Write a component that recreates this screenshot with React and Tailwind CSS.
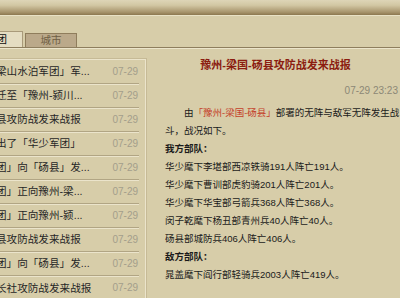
import React from 'react';

const reports = [
  { title: '梁山水泊军团」军...', date: '07-29' },
  { title: '迁至「豫州-颍川...', date: '07-29' },
  { title: '县攻防战发来战报', date: '07-29' },
  { title: '出了「华少军团」', date: '07-29' },
  { title: '团」向「砀县」发...', date: '07-29' },
  { title: '团」正向豫州-梁...', date: '07-29' },
  { title: '团」正向豫州-颍...', date: '07-29' },
  { title: '县攻防战发来战报', date: '07-29' },
  { title: '团」向「砀县」发...', date: '07-29' },
  { title: '长社攻防战发来战报', date: '07-29' },
];

const ourTroops = [
  '华少麾下李堪部西凉铁骑191人阵亡191人。',
  '华少麾下曹训部虎豹骑201人阵亡201人。',
  '华少麾下华宝部弓箭兵368人阵亡368人。',
  '闵子乾麾下杨丑部青州兵40人阵亡40人。',
  '砀县部城防兵406人阵亡406人。',
];

const enemyTroops = ['晁盖麾下阎行部轻骑兵2003人阵亡419人。'];

function ReportList() {
  return (
    <div className="ml-[-5px] w-[151px] pt-[10px]">
      <div className="border-t border-r border-[#ebe4cb] shadow-[1px_-1px_0_#c6ba96]">
        {reports.map((item, i) => (
          <div key={i} className="mr-[6px]">
            <div
              className={
                'flex h-[24px] items-center justify-between ' +
                (i < reports.length - 1 ? 'border-b border-[#b1a584] shadow-[0_1px_0_#ebe4cb]' : '')
              }
            >
              <span className="pl-[1px] text-[10.6px] leading-none text-[#262626] whitespace-nowrap">
                {item.title}
              </span>
              <span className="pr-[1px] text-[10px] leading-none text-[#a39e8b]">{item.date}</span>
            </div>
          </div>
        ))}
      </div>
    </div>
  );
}

function ReportDetail() {
  return (
    <div className="flex-1 min-w-0 pl-[5px] pt-[8px]">
      <h1 className="text-center text-[11px] font-bold leading-[16px] text-[#8b1c10] whitespace-nowrap">
        豫州-梁国-砀县攻防战发来战报
      </h1>
      <div className="mt-[11px] pr-[2px] text-right text-[10px] leading-[14px] text-[#8c8876]">
        07-29 23:23
      </div>
      <div className="mt-[6px] pl-[14px] text-[9.5px] leading-[18px] text-[#1a1a1a]">
        <p className="whitespace-nowrap pl-[2em]">
          由<span className="text-[#c4402a]">「豫州-梁国-砀县」</span>部署的无阵与敌军无阵发生战
        </p>
        <p>斗，战况如下。</p>
        <p className="font-bold">我方部队：</p>
        {ourTroops.map((line) => (
          <p key={line} className="whitespace-nowrap">{line}</p>
        ))}
        <p className="font-bold">敌方部队：</p>
        {enemyTroops.map((line) => (
          <p key={line} className="whitespace-nowrap">{line}</p>
        ))}
      </div>
    </div>
  );
}

export default function App() {
  return (
    <div className="relative h-[298px] w-[400px] overflow-hidden bg-[#d7cda9] font-['Liberation_Sans','Noto_Sans_CJK_SC',sans-serif]">
      {/* top bar */}
      <div className="h-[15px] bg-[linear-gradient(to_bottom,#ded5b7_0%,#d2c7a3_35%,#a8956d_80%,#8c784f_100%)]" />
      <div className="h-[1px] bg-[#e9e2c6]" />

      {/* tabs */}
      <div className="flex h-[31px] items-end gap-[2px] ml-[-29px]">
        <div className="flex h-[16px] w-[52px] items-center justify-center border-t border-r border-[#a99a7a] bg-[#e5ddc2] text-[10.5px] text-[#111]">
          军团
        </div>
        <div className="flex h-[14px] w-[52px] items-center justify-center border-t border-x border-[#8f7d5c] bg-[#bba98a] text-[10.5px] text-[#6f5f45]">
          城市
        </div>
      </div>
      <div className="h-[1px] bg-[#8e7e5e]" />
      <div className="h-[1px] bg-[#ece5cb]" />

      <div className="flex">
        <ReportList />
        <ReportDetail />
      </div>
    </div>
  );
}
